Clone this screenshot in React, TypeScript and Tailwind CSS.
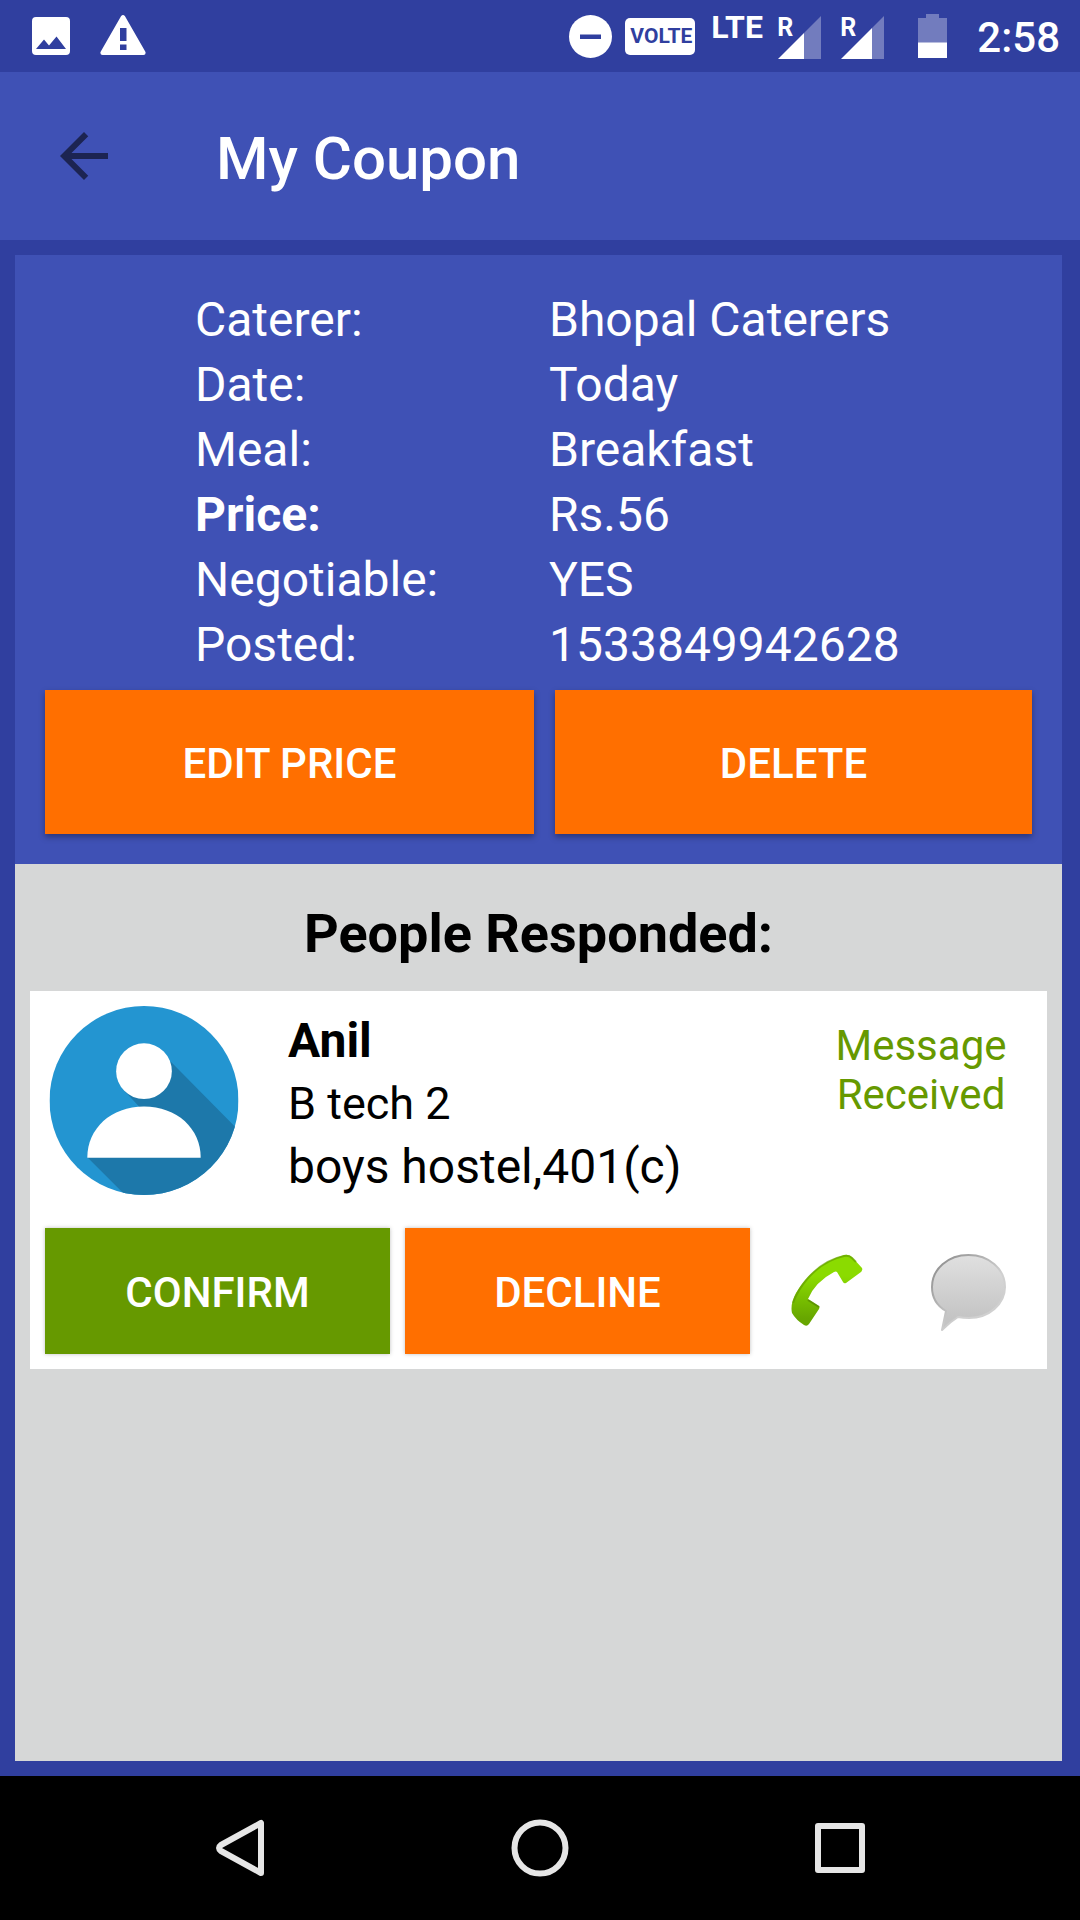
import type { ReactNode } from "react";

const details = [
  { label: "Caterer:", value: "Bhopal Caterers" },
  { label: "Date:", value: "Today" },
  { label: "Meal:", value: "Breakfast" },
  { label: "Price:", value: "Rs.56", strong: true },
  { label: "Negotiable:", value: "YES" },
  { label: "Posted:", value: "1533849942628" },
];

function Signal({ fill }: { fill: number }) {
  return (
    <span className="relative mt-[15px] block w-[43px]">
      <svg width="43" height="44" viewBox="0 0 43 44" aria-hidden="true">
        <path d={`M43 1V44H${fill}V${44 - fill}Z`} fill="#fff" fillOpacity="0.32" />
        <path d={`M0 44H${fill}V${44 - fill}Z`} fill="#fff" />
      </svg>
      <span className="absolute top-0 -left-px text-[25px] leading-[26px] font-bold">R</span>
    </span>
  );
}

function StatusBar() {
  return (
    <div className="flex h-[72px] items-start bg-[#303f9f] pr-5 pl-8 text-white">
      <svg className="mt-[17px]" width="38" height="38" viewBox="0 0 38 38" aria-hidden="true">
        <path
          fill="#fff"
          fillRule="evenodd"
          d="M4 0H34Q38 0 38 4V34Q38 38 34 38H4Q0 38 0 34V4Q0 0 4 0ZM4 32H34L24.500 19.500L17 28.500L12 22.500Z"
        />
      </svg>
      <svg className="mt-[15px] ml-[30px]" width="46" height="40" viewBox="0 0 46 40" aria-hidden="true">
        <path
          fill="#fff"
          fillRule="evenodd"
          d="M21 1.200Q23 -1 25 1.200L45.500 37Q46 40 43.500 40H2.500Q0 40 .5 37ZM20 13V26H26.500V13ZM20 29.500V35H26.500V29.500Z"
        />
      </svg>
      <div className="ml-auto flex items-start">
        <svg className="mt-[15px]" width="43" height="43" viewBox="0 0 43 43" aria-hidden="true">
          <circle cx="21.500" cy="21.500" r="21.500" fill="#fff" />
          <path d="M11 19.500H32V24H11Z" fill="#303f9f" />
        </svg>
        <span className="mt-[18px] ml-[13px] flex h-[37px] w-[70px] items-center justify-center rounded-[5px] bg-white pl-[2px] text-[21px] leading-none font-bold text-[#303f9f]">
          VOLTE
        </span>
        <span className="mt-[11px] ml-4 w-[52px] text-[32px] leading-8 font-bold">LTE</span>
        <span className="ml-[15px] flex gap-5">
          <Signal fill={26} />
          <Signal fill={31} />
        </span>
        <svg className="mt-[14px] ml-[34px]" width="29" height="44" viewBox="0 0 29 44" aria-hidden="true">
          <path d="M8 0H21V4H29V29H0V4H8Z" fill="#fff" fillOpacity="0.32" />
          <path d="M0 28.500H29V44H0Z" fill="#fff" />
        </svg>
        <span className="mt-[13px] ml-[30px] text-[42px] leading-[50px] font-medium">2:58</span>
      </div>
    </div>
  );
}

function Action({ className, children }: { className: string; children: ReactNode }) {
  return (
    <button type="button" className={`pt-1 text-[42px] leading-[50px] font-medium text-white uppercase ${className}`}>
      {children}
    </button>
  );
}

function Avatar() {
  return (
    <svg width="190" height="189" viewBox="0 0 190 190" role="img" aria-label="Profile picture">
      <defs>
        <clipPath id="avatar-disc">
          <circle cx="95" cy="95" r="95" />
        </clipPath>
      </defs>
      <g clipPath="url(#avatar-disc)">
        <path d="M0 0H190V190H0Z" fill="#2395d1" />
        <path d="M122 56L190 125V190H76L38 152L90 101L74 84Z" fill="#1d78aa" />
      </g>
      <circle cx="95" cy="65.500" r="28" fill="#fff" />
      <path d="M38 152.500C38 123 62 101 95 101S152 123 152 152.500Z" fill="#fff" />
    </svg>
  );
}

function PhoneIcon() {
  return (
    <svg width="72" height="74" viewBox="0 0 72 74" aria-hidden="true">
      <defs>
        <linearGradient id="handset" x1="0" y1="0" x2="0" y2="1">
          <stop offset="0.3" stopColor="#8bdb00" />
          <stop offset="0.9" stopColor="#67a600" />
        </linearGradient>
      </defs>
      <path
        d="M53 1Q58 0 61 3L71 14Q72 16 70 18L55 29Q53 30 52 28L46 18Q45 17 43 18Q24 28 17 45L28 52Q29 53 28 55L18 70Q16 73 13 71Q5 66 1 59Q-1 50 5 39Q22 10 53 1Z"
        fill="url(#handset)"
      />
      <path d="M2 49Q7 35 17 24Q33 6 53 2Q58 1 61 4L65 8" fill="none" stroke="#5f9600" strokeOpacity="0.6" strokeWidth="2" />
      <path d="M17 46L28 53" fill="none" stroke="#4f7f00" strokeOpacity="0.6" strokeWidth="2" />
    </svg>
  );
}

function ChatIcon() {
  return (
    <svg width="75" height="78" viewBox="0 0 75 78" aria-hidden="true">
      <defs>
        <linearGradient id="bubble" x1="0" y1="0" x2="0" y2="1">
          <stop offset="0" stopColor="#e0e0e0" />
          <stop offset="0.85" stopColor="#c4c4c4" />
        </linearGradient>
        <linearGradient id="bubble-edge" x1="0" y1="0" x2="1" y2="1">
          <stop offset="0" stopColor="#868686" />
          <stop offset="0.6" stopColor="#d0d0d0" />
        </linearGradient>
      </defs>
      <path
        d="M37.500 1C58 1 74 15 74 33C74 50 58 64 38 64Q32 64 27 63Q19 68 11 76L15 57Q1 49 1 33C1 15 17 1 37.500 1Z"
        fill="url(#bubble)"
        stroke="url(#bubble-edge)"
        strokeWidth="2"
        strokeLinejoin="round"
      />
    </svg>
  );
}

export default function App() {
  return (
    <div className="flex min-h-screen flex-col bg-[#303f9f] font-['Roboto',sans-serif]">
      <StatusBar />

      <header className="flex h-[168px] items-center bg-[#3f51b5] pl-12 text-white">
        <button type="button" aria-label="Back">
          <svg width="72" height="72" viewBox="0 0 24 24" aria-hidden="true">
            <path d="M20 11H7.830l5.590-5.590L12 4l-8 8 8 8 1.410-1.410L7.830 13H20v-2z" fill="#1c2452" />
          </svg>
        </button>
        <h1 className="ml-24 pt-[6px] text-[60px] leading-[72px] font-medium">My Coupon</h1>
      </header>

      <main className="flex flex-1 flex-col py-[15px] pr-[18px] pl-[15px]">
        <section className="bg-[#3f51b5] px-[30px] pt-8 pb-[30px] text-white">
          <dl className="pl-[150px] text-[48px] leading-[65px]">
            {details.map((row) => (
              <div key={row.label} className="flex">
                <dt className={row.strong ? "w-[354px] font-bold" : "w-[354px]"}>{row.label}</dt>
                <dd>{row.value}</dd>
              </div>
            ))}
          </dl>
          <div className="mt-[13px] flex gap-[21px]">
            <Action className="h-36 flex-[489] bg-[#ff6f00] shadow-[0_3px_6px_rgba(0,0,0,0.35)]">Edit price</Action>
            <Action className="h-36 flex-[477] bg-[#ff6f00] shadow-[0_3px_6px_rgba(0,0,0,0.35)]">Delete</Action>
          </div>
        </section>

        <section className="flex-1 bg-[#d6d7d7] px-[15px] pt-9">
          <h2 className="text-center text-[54px] leading-[68px] font-bold text-black">People Responded:</h2>

          <article className="mt-[23px] bg-white p-[15px] text-black">
            <div className="flex pl-1">
              <Avatar />
              <div className="ml-[49px] flex-1 text-[48px]">
                <h3 className="pt-[3px] leading-[63px] font-bold">Anil</h3>
                <p className="text-[45px] leading-[63px]">B tech 2</p>
                <p className="leading-[63px]">boys hostel,401(c)</p>
              </div>
              <p className="mr-[21px] w-[180px] pt-[15px] text-center text-[42px] leading-[49px] text-[#669900]">
                Message Received
              </p>
            </div>
            <div className="mt-[30px] flex">
              <div className="flex gap-[15px]">
                <Action className="h-[126px] w-[345px] bg-[#669900] shadow-[0_0_4px_rgba(0,0,0,0.25)]">Confirm</Action>
                <Action className="h-[126px] w-[345px] bg-[#ff6f00] shadow-[0_0_4px_rgba(0,0,0,0.25)]">Decline</Action>
              </div>
              <div className="flex flex-1 items-start justify-between pt-[26px] pr-[26px] pl-[41px]">
                <button type="button" aria-label="Call">
                  <PhoneIcon />
                </button>
                <button type="button" aria-label="Message">
                  <ChatIcon />
                </button>
              </div>
            </div>
          </article>
        </section>
      </main>

      <nav className="flex h-36 items-center justify-center gap-[240px] bg-black">
        <button type="button" aria-label="Back">
          <svg width="60" height="60" viewBox="0 0 60 60" fill="none" stroke="#e6e6e6" strokeWidth="6" strokeLinejoin="round" aria-hidden="true">
            <path d="M51 5V55L11 33Q7 30 11 27Z" />
          </svg>
        </button>
        <button type="button" aria-label="Home">
          <svg width="60" height="60" viewBox="0 0 60 60" fill="none" stroke="#e6e6e6" strokeWidth="6" aria-hidden="true">
            <circle cx="30" cy="30" r="25.500" />
          </svg>
        </button>
        <button type="button" aria-label="Recent apps">
          <svg width="60" height="60" viewBox="0 0 60 60" fill="none" stroke="#e6e6e6" strokeWidth="6" strokeLinejoin="round" aria-hidden="true">
            <path d="M8 8H52V52H8Z" />
          </svg>
        </button>
      </nav>
    </div>
  );
}
